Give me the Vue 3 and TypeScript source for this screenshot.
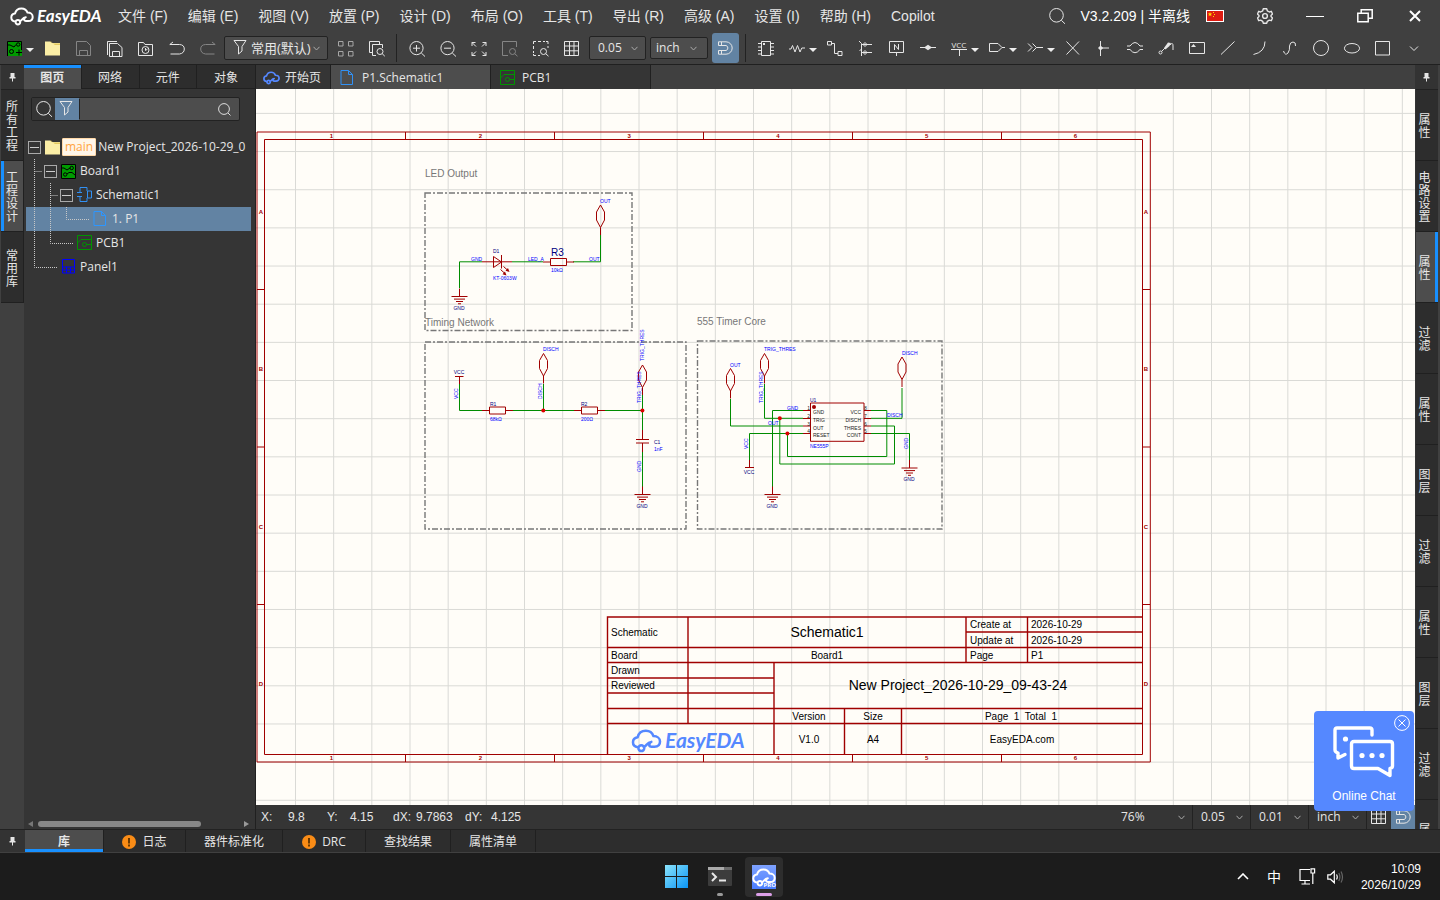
<script setup lang="ts">
import { h, ref } from 'vue'

type Glyph = { s?: string; f?: string }

const glyphs: Record<string, Glyph> = {
  save: { s: 'M.5 .5H10.5L14.5 4.5V14.5H.5Z M3.5 14.5V9.5H11.5V14.5' },
  saveAll: { s: 'M2.5 2.5H10.5L15 6.5V15.5H2.5Z M5.5 15.5V10.5H12.5V15.5 M.5 14V.5H10' },
  history: { s: 'M.5 14.5V1.5H5.5L7 3.5H14.5V14.5Z M7.5 5.5A3.5 3.5 0 1 1 7.5 12.5A3.5 3.5 0 1 1 7.5 5.5 M7.5 7V9.5L9.5 8' },
  undo: { s: 'M4 1L.8 3.5H10.5Q15.3 3.8 15.3 8T10.5 13H1.5' },
  redo: { s: 'M12 1L15.2 3.5H5.5Q.7 3.8 .7 8T5.5 13H14.5' },
  filter: { s: 'M1 .5H13L9 6.5V11L5.5 14V6.5Z' },
  tiles: { s: 'M.5 .5H5V5H.5Z M10.5 .5H15V5H10.5Z M.5 10.5H5V15H.5Z M10.5 10.5H15V15H10.5Z' },
  find: { s: 'M3 11.5H.5V.5H10.5V3 M7 14.5H3.5V3.5H13.5V7 M11 7.5A3 3 0 1 1 11 13.5A3 3 0 1 1 11 7.5 M13.2 12.7L15.8 15.2' },
  zoomIn: { s: 'M7.5 .5A6.6 6.6 0 1 1 7.5 13.7A6.6 6.6 0 1 1 7.5 .5 M12.3 12L16 15.5 M7.5 4V10.5 M4 7.2H11' },
  zoomOut: { s: 'M7.5 .5A6.6 6.6 0 1 1 7.5 13.7A6.6 6.6 0 1 1 7.5 .5 M12.3 12L16 15.5 M4 7.2H11' },
  fit: { s: 'M1 5V1.5H4.5M1 1.5L5 5.5 M11.5 1.5H15V5M15 1.5L11 5.5 M1 11V14.5H4.5M1 14.5L5 10.5 M11.5 14.5H15V11M15 14.5L11 10.5' },
  zoomSheet: { s: 'M6 14.5H.5V.5H14.5V6 M10.5 7.5A3 3 0 1 1 10.5 13.5A3 3 0 1 1 10.5 7.5 M12.7 12.7L15.5 15.2' },
  zoomArea: { s: 'M.5 3V.5H3 M5 .5H8 M10 .5H12 M13 .5H15V3 M.5 5V8 M.5 10V12 M.5 13V14.5H3 M5 14.5H7 M15 5V7 M10.5 7.5A3 3 0 1 1 10.5 13.5A3 3 0 1 1 10.5 7.5 M12.7 12.7L15.5 15.2' },
  grid: { s: 'M.5 .5H14.5V14.5H.5Z M5.5 .5V14.5 M10 .5V14.5 M.5 5H14.5 M.5 9.8H14.5' },
  chip: { s: 'M3.5 .5H12.5V14.5H3.5Z M0 2.5H3 M0 6H3 M0 9.5H3 M0 13H3 M13 2.5H16 M13 6H16 M13 9.5H16 M13 13H16', f: 'M5 2H7V4H5Z' },
  resistor: { s: 'M0 8H2L3.5 4.5L6 11L8.5 4.5L11 11L12.8 7H16' },
  wire: { s: 'M.5 .5H4.5V4H.5Z M5 2.5H7.5V12.5H11 M11 10.5H15V14.5H11Z' },
  bus: { s: 'M1 0L3.5 2.5V15 M3.5 3.5H14 M3.5 11.5H14 M5 3.5L7 1.5L9 3.5L7 5.5Z M5 11.5L7 9.5L9 11.5L7 13.5Z M3.5 8L1.5 10' },
  netLabel: { s: 'M.5 .5H14.5V11.5H.5Z M7.5 11.5V15 M5.5 9V3.5L9.5 8.5V3' },
  junction: { s: 'M0 6.5H16', f: 'M4 6.5L8 3.8L12 6.5L8 9.2Z' },
  port: { s: 'M.5 2.5H9L13 6.5L9 10.5H.5Z M13 6.5H16' },
  connector: { s: 'M1 2.5L5 6.5L1 10.5 M5.5 2.5L9.5 6.5L5.5 10.5 M9.5 6.5H16' },
  cross: { s: 'M1.5 .5L14 13.5 M14 .5L1.5 13.5' },
  tee: { s: 'M4.5 0V15 M4.5 7H13', f: 'M4.5 4.5L7.2 7L4.5 9.5L2 7Z' },
  hop: { s: 'M0 5H3Q8 -2 13 5H16 M0 8.5H3Q8 15 13 8.5H16' },
  probe: { s: 'M1 11.5A1.5 1.5 0 1 1 4 11.5A1.5 1.5 0 1 1 1 11.5 M3.5 10.5L7 7 M12 4Q15 .5 15 5V9', f: 'M6 7L10 1.5L13 2L11.5 5L7.5 8.5Z' },
  frame: { s: 'M.5 1.5H15.5V12.5H.5Z', f: 'M2 6L4.5 3L7 6Z' },
  line: { s: 'M1 13.5L14.5 .5' },
  arc: { s: 'M14 .5Q14 11 2.5 13.5' },
  curve: { s: 'M1.5 10Q3 15 6 12Q8 9 7.5 5Q8 1 11 1Q14 1 13.5 5' },
  circle: { s: 'M8 -.5A7.5 7.5 0 1 1 8 14.5A7.5 7.5 0 1 1 8 -.5' },
  ellipse: { s: 'M8 2.5A7.5 4.7 0 1 1 8 12A7.5 4.7 0 1 1 8 2.5' },
  rect: { s: 'M.5 .5H14.5V14H.5Z' },
  more: { s: 'M4 5.5L8 9.5L12 5.5' },
  search: { s: 'M7.5 .5A6.8 6.8 0 1 1 7.5 14.1A6.8 6.8 0 1 1 7.5 .5 M12.3 12.3L16 15.8' },
  file: { s: 'M1 .5H8.5L12.5 4.5V14.5H1Z M8.5 .5V4.5H12.5' },
  pcb: { s: 'M.5 .5H14.5V14.5H.5Z M.5 8L4 4.5H14.5 M5.5 9.5A2 2 0 1 1 9.5 9.5A2 2 0 1 1 5.5 9.5 M9.5 9.5H14.5' },
  symbol: { s: 'M3 5V.5H10V4 M3 10V14.5H10V11 M0 5.5H5 M0 9.5H5 M10.5 4H14.5V11H10.5Z' },
  panel: { s: 'M1.5 .5H13.5V14H1.5Z M1.5 8H13.5 M1.5 11H13.5 M5.5 8V14 M9.5 8V14' },
  pin: { s: 'M7.5 9V12.5', f: 'M5.5 4H9.5V8H10.5V9.5H4.5V8H5.5Z' },
}

const Icon = (p: { name: string }) =>
  h('svg', { width: 16, height: 16, viewBox: '0 0 16 16', overflow: 'visible', 'aria-hidden': 'true' }, [
    h('path', { d: glyphs[p.name].s, fill: 'none', stroke: 'currentColor' }),
    h('path', { d: glyphs[p.name].f, fill: 'currentColor' }),
  ])
Icon.props = ['name']

const Magnet = () =>
  h('svg', { width: 15, height: 14, viewBox: '0 0 15 14', 'aria-hidden': 'true', fill: 'none', stroke: 'currentColor' }, [
    h('path', { d: 'M.5 .8H8A6 6 0 0 1 8 13.2H.5V9.5H8A2.6 2.6 0 0 0 8 4.5H.5Z M3.5 1V4.5 M3.5 9.5V13' }),
  ])

const Cloud = () =>
  h('svg', { width: 24, height: 19, viewBox: '0 0 24 19', 'aria-hidden': 'true', fill: 'none', stroke: 'currentColor', 'stroke-linecap': 'round', 'stroke-linejoin': 'round' }, [
    h('path', {
      d: 'M5.2 14.4C2.6 14 1.3 12.3 1.3 10.4C1.3 8.3 3 6.8 5 6.5C5.8 3.3 8.3 1.4 11.5 1.4C14.4 1.4 16.6 3 17.5 5.6C20.5 5.6 22.7 7.4 22.7 9.9C22.7 12.6 20.8 14 18.3 14H15.8C14.2 14 13.6 12.6 14.6 11.5 M9.8 14.2C12 13.8 12.2 10.6 15.8 10.2 M5.6 15.2A2.3 2.3 0 1 1 10.2 15.2A2.3 2.3 0 1 1 5.6 15.2',
    }),
  ])

const menus = ['文件 (F)', '编辑 (E)', '视图 (V)', '放置 (P)', '设计 (D)', '布局 (O)', '工具 (T)', '导出 (R)', '高级 (A)', '设置 (I)', '帮助 (H)', 'Copilot']

const fileTools = [
  { icon: 'save', label: '保存', dim: true },
  { icon: 'saveAll', label: '全部保存', dim: false },
  { icon: 'history', label: '历史记录', dim: false },
  { icon: 'undo', label: '撤销', dim: false },
  { icon: 'redo', label: '重做', dim: true },
]
const viewTools = [
  { icon: 'zoomIn', label: '放大', dim: false },
  { icon: 'zoomOut', label: '缩小', dim: false },
  { icon: 'fit', label: '适应全部', dim: false },
  { icon: 'zoomSheet', label: '适应选中', dim: true },
  { icon: 'zoomArea', label: '区域适应', dim: false },
  { icon: 'grid', label: '网格', dim: false },
]
const drawTools = [
  { icon: 'chip', label: '器件' },
  { icon: 'resistor', label: '常用器件', drop: true },
  { icon: 'wire', label: '导线' },
  { icon: 'bus', label: '总线' },
  { icon: 'netLabel', label: '网络标签' },
  { icon: 'junction', label: '节点' },
  { icon: 'vcc', label: '电源', drop: true },
  { icon: 'port', label: '网络端口', drop: true },
  { icon: 'connector', label: '连接符', drop: true },
  { icon: 'cross', label: '非连接标识' },
  { icon: 'tee', label: '短接符' },
  { icon: 'hop', label: '差分对' },
  { icon: 'probe', label: '探针' },
  { icon: 'frame', label: '图框' },
  { icon: 'line', label: '直线' },
  { icon: 'arc', label: '圆弧' },
  { icon: 'curve', label: '贝塞尔曲线' },
  { icon: 'circle', label: '圆' },
  { icon: 'ellipse', label: '椭圆' },
  { icon: 'rect', label: '矩形' },
  { icon: 'more', label: '更多' },
]

const leftStrip = ['所有工程', '工程设计', '常用库']
const rightStrip = ['属性', '电路设置', '属性', '过滤', '属性', '图层', '过滤', '属性', '图层', '过滤', '属性']
const panelTabs = ['图页', '网络', '元件', '对象']
const bottomTabs = [
  { text: '库', cls: 'w80' },
  { text: '日志', cls: 'w82', warn: true },
  { text: '器件标准化', cls: 'w97' },
  { text: 'DRC', cls: 'w83', warn: true },
  { text: '查找结果', cls: 'w85' },
  { text: '属性清单', cls: 'w85' },
]
const activeLeft = ref(1)
const activeRight = ref(2)
const activePanel = ref(0)
const activeBottom = ref(0)
const query = ref('')

const gridX = Array.from({ length: 70 }, (_, i) => 295.5 + i * 38.167)
const gridY = Array.from({ length: 40 }, (_, i) => 113.4 + i * 38.16)

const columns = Array.from({ length: 6 }, (_, i) => ({ n: i + 1, x: 331.5 + i * 148.8, tick: 405.5 + i * 149 }))
const rows = ['A', 'B', 'C', 'D'].map((n, i) => ({ n, y: 214 + i * 157.4, tick: 289.5 + i * 157.5 }))

const flags = [
  { x: 600.5, y: 205 },
  { x: 543.5, y: 353.5 },
  { x: 642.5, y: 365 },
  { x: 730.5, y: 368.5 },
  { x: 764.5, y: 353.5 },
  { x: 902, y: 357 },
]
const grounds = [
  { x: 459.5, y: 296.5 },
  { x: 642.5, y: 494.5 },
  { x: 772.5, y: 494.5 },
  { x: 909.5, y: 468 },
]
const resistors = [
  { x: 550.5, y: 262 },
  { x: 489.5, y: 410.5 },
  { x: 581.5, y: 410.5 },
]
const netLabels = [
  { t: 'OUT', x: 600, y: 203 },
  { t: 'GND', x: 471, y: 261 },
  { t: 'LED_A', x: 528, y: 261 },
  { t: 'OUT', x: 589, y: 261 },
  { t: 'KT-0603W', x: 493, y: 280 },
  { t: '10kΩ', x: 551, y: 272 },
  { t: '68kΩ', x: 490, y: 421 },
  { t: '200Ω', x: 581, y: 421 },
  { t: '1nF', x: 654, y: 451 },
  { t: 'DISCH', x: 543, y: 351 },
  { t: 'OUT', x: 730, y: 367 },
  { t: 'TRIG_THRES', x: 764, y: 351 },
  { t: 'DISCH', x: 902, y: 355 },
  { t: 'DISCH', x: 887, y: 417 },
  { t: 'GND', x: 787, y: 410 },
  { t: 'OUT', x: 768, y: 425 },
  { t: 'NE555P', x: 810, y: 448 },
]
const turnedLabels = [
  { t: 'VCC', x: 458, y: 399 },
  { t: 'DISCH', x: 542, y: 399 },
  { t: 'TRIG_THRES', x: 644, y: 361 },
  { t: 'TRIG_THRES', x: 641, y: 403 },
  { t: 'GND', x: 641, y: 472 },
  { t: 'TRIG_THRES', x: 763, y: 403 },
  { t: 'VCC', x: 748, y: 449 },
  { t: 'GND', x: 908, y: 449 },
]
const designators = [
  { t: 'D1', x: 493, y: 253 },
  { t: 'R1', x: 490, y: 406 },
  { t: 'R2', x: 581, y: 406 },
  { t: 'C1', x: 654, y: 444 },
  { t: 'U1', x: 810, y: 402 },
]
const powerNames = [
  { t: 'GND', x: 459, y: 310 },
  { t: 'VCC', x: 459, y: 374 },
  { t: 'GND', x: 642, y: 508 },
  { t: 'GND', x: 772, y: 508 },
  { t: 'VCC', x: 749, y: 474 },
  { t: 'GND', x: 909, y: 481 },
]
const pins = [
  { l: 'GND', ln: '1', r: 'VCC', rn: '8', y: 410.5 },
  { l: 'TRIG', ln: '2', r: 'DISCH', rn: '7', y: 418.5 },
  { l: 'OUT', ln: '3', r: 'THRES', rn: '6', y: 426 },
  { l: 'RESET', ln: '4', r: 'CONT', rn: '5', y: 433.5 },
]
const blockLabels = [
  { t: 'Schematic', x: 611, y: 636 },
  { t: 'Board', x: 611, y: 659 },
  { t: 'Drawn', x: 611, y: 674 },
  { t: 'Reviewed', x: 611, y: 689 },
  { t: 'Create at', x: 970, y: 628 },
  { t: 'Update at', x: 970, y: 644 },
  { t: 'Page', x: 970, y: 659 },
  { t: '2026-10-29', x: 1031, y: 628 },
  { t: '2026-10-29', x: 1031, y: 644 },
  { t: 'P1', x: 1031, y: 659 },
]
const blockCentered = [
  { t: 'Board1', x: 827, y: 659 },
  { t: 'Version', x: 809, y: 720 },
  { t: 'Size', x: 873, y: 720 },
  { t: 'Page  1  Total  1', x: 1021, y: 720 },
  { t: 'V1.0', x: 809, y: 743 },
  { t: 'A4', x: 873, y: 743 },
  { t: 'EasyEDA.com', x: 1022, y: 743 },
]
</script>

<template>
  <div class="app">
    <header class="menubar">
      <div class="brand"><Cloud class="brand-cloud" /><span>EasyEDA</span></div>
      <nav class="menus">
        <button v-for="m in menus" :key="m">{{ m }}</button>
      </nav>
      <div class="title-right">
        <button class="plain" aria-label="搜索"><Icon name="search" /></button>
        <span class="version">V3.2.209 | 半离线</span>
        <svg class="flag" width="18" height="12" viewBox="0 0 18 12" aria-hidden="true">
          <rect width="18" height="12" fill="#fff" />
          <rect x="1" y="1" width="16" height="10" fill="#de1c12" />
          <path d="M4 2L4.6 3.6H6.2L5 4.6L5.4 6.2L4 5.2L2.6 6.2L3 4.6L1.8 3.6H3.4Z M7 2H8V3H7Z M8 4H9V5H8Z M7 6H8V7H7Z" fill="#ffde00" />
        </svg>
      </div>
      <div class="window-buttons">
        <button aria-label="设置">
          <svg width="16" height="16" viewBox="0 0 16 16" fill="none" stroke="currentColor" stroke-width="1.4" stroke-linejoin="round">
            <path d="M6.3 .8H9.7L10.3 2.8L12.4 4L14.3 3.3L15.5 6L14 7.5V8.6L15.5 10L14.3 12.7L12.3 12.1L10.3 13.3L9.7 15.2H6.3L5.7 13.3L3.7 12.1L1.7 12.7L.5 10L2 8.6V7.5L.5 6L1.7 3.3L3.6 4L5.7 2.8Z" />
            <circle cx="8" cy="8" r="2.4" />
          </svg>
        </button>
        <button aria-label="最小化"><svg width="18" height="16" viewBox="0 0 18 16" stroke="#fff"><path d="M0 8.5H18" /></svg></button>
        <button aria-label="还原">
          <svg width="16" height="14" viewBox="0 0 16 14" fill="none" stroke="#fff" stroke-width="1.5"><path d="M.8 4.2H11.2V12.8H.8Z M4.2 4V.8H15.2V9.2H11.5" /></svg>
        </button>
        <button aria-label="关闭"><svg width="12" height="12" viewBox="0 0 12 12" stroke="#fff" stroke-width="2"><path d="M1 1L11 11M11 1L1 11" /></svg></button>
      </div>
    </header>

    <div class="toolbar">
      <button class="tool lead" aria-label="新建">
        <svg width="15" height="15" viewBox="0 0 15 15" fill="none" stroke="#000">
          <rect width="15" height="15" fill="#009a00" stroke="none" />
          <path d="M.5 15V.5H14.5V9 M1 4H3L7 6L9 3.5 M9.5 3.5A1.7 1.7 0 1 1 12.9 3.5A1.7 1.7 0 1 1 9.5 3.5 M2.5 10.5A2 2 0 1 1 6.5 10.5A2 2 0 1 1 2.5 10.5 M9 11.5H15 M12 8.5V14.5" />
        </svg>
        <i class="caret"></i>
      </button>
      <button class="tool" aria-label="打开">
        <svg width="16" height="15" viewBox="0 0 16 15"><path d="M0 14.5V.5H5L7 2H15V14.5Z" fill="#fbeea6" /><path d="M5 .5H6L8 2.5H15V4H10Z" fill="#e2c85c" /></svg>
      </button>
      <button v-for="t in fileTools" :key="t.icon" class="tool" :class="{ dim: t.dim }" :aria-label="t.label"><Icon :name="t.icon" /></button>
      <label class="picker preset">
        <Icon name="filter" class="lead-icon" />
        <select aria-label="过滤器"><option>常用(默认)</option></select>
        <svg class="chev" width="7" height="5" viewBox="0 0 7 5"><path d="M.5 .8L3.5 4L6.5 .8" /></svg>
      </label>
      <button class="tool dimmer gap2" aria-label="排列"><Icon name="tiles" /></button>
      <button class="tool" aria-label="查找"><Icon name="find" /></button>
      <span class="sep"></span>
      <button v-for="t in viewTools" :key="t.icon" class="tool" :class="{ dim: t.dim }" :aria-label="t.label"><Icon :name="t.icon" /></button>
      <label class="picker size">
        <select aria-label="栅格尺寸"><option>0.05</option></select>
        <svg class="chev" width="7" height="5" viewBox="0 0 7 5"><path d="M.5 .8L3.5 4L6.5 .8" /></svg>
      </label>
      <label class="picker unit">
        <select aria-label="单位"><option>inch</option></select>
        <svg class="chev" width="7" height="5" viewBox="0 0 7 5"><path d="M.5 .8L3.5 4L6.5 .8" /></svg>
      </label>
      <button class="snap" aria-label="吸附"><Magnet /></button>
      <span class="sep second"></span>
      <button v-for="t in drawTools" :key="t.icon" class="tool" :class="{ wide: t.drop }" :aria-label="t.label">
        <span v-if="t.icon === 'vcc'" class="vcc">VCC</span>
        <Icon v-else :name="t.icon" />
        <i v-if="t.drop" class="caret"></i>
      </button>
    </div>

    <main class="work">
      <aside class="strip left">
        <button class="pin" aria-label="固定左侧面板"><Icon name="pin" /></button>
        <button v-for="(t, i) in leftStrip" :key="t" class="vtab" :class="{ on: i === activeLeft }" @click="activeLeft = i"><span>{{ t }}</span></button>
      </aside>

      <section class="panel">
        <div class="panel-tabs">
          <button v-for="(t, i) in panelTabs" :key="t" :class="{ on: i === activePanel }" @click="activePanel = i">{{ t }}</button>
        </div>
        <div class="search-row">
          <button class="find" aria-label="查找"><Icon name="search" /></button>
          <button class="filter" aria-label="过滤"><Icon name="filter" /></button>
          <input v-model="query" aria-label="搜索图页" />
          <svg class="glass" width="13" height="13" viewBox="0 0 13 13" fill="none" stroke="#ddd"><circle cx="6" cy="6" r="5.4" /><path d="M10 10L12.5 12.5" /></svg>
        </div>
        <div class="tree">
          <svg class="guides" width="80" height="144" viewBox="0 0 80 144" aria-hidden="true">
            <path d="M10.5 24V132.5H34 M10.5 36.5H18 M26.5 48V108.5H50 M26.5 60.5H34 M42.5 72V84.5H66" />
          </svg>
          <ul>
            <li>
              <div class="node"><button class="fold" aria-label="折叠"></button>
                <svg class="nicon" width="15" height="15" viewBox="0 0 15 15"><path d="M0 14.5V.5H5L7 2H15V14.5Z" fill="#fbeea6" /><path d="M5 .5H6L8 2.5H15V4H10Z" fill="#e2c85c" /></svg>
                <span class="badge">main</span><span class="name">New Project_2026-10-29_0</span>
              </div>
              <ul>
                <li>
                  <div class="node"><button class="fold" aria-label="折叠"></button>
                    <svg class="nicon" width="15" height="15" viewBox="0 0 15 15" fill="none" stroke="#000">
                      <rect width="15" height="15" fill="#009a00" stroke="none" />
                      <path d="M.5 .5H14.5V14.5H.5Z M1 4H3L6 6L9 4 M9 4A1.7 1.7 0 1 1 12.4 4A1.7 1.7 0 1 1 9 4 M2.5 10.5A1.7 1.7 0 1 1 5.9 10.5A1.7 1.7 0 1 1 2.5 10.5 M6 10L8 8.5H11L14 11" />
                    </svg>
                    <span class="name">Board1</span>
                  </div>
                  <ul>
                    <li>
                      <div class="node"><button class="fold" aria-label="折叠"></button><Icon name="symbol" class="nicon blue" /><span class="name tight">Schematic1</span></div>
                      <ul>
                        <li class="node sel leaf"><Icon name="file" class="nicon blue" /><span class="name tight">1. P1</span></li>
                      </ul>
                    </li>
                    <li class="node leaf"><Icon name="pcb" class="nicon green" /><span class="name tight">PCB1</span></li>
                  </ul>
                </li>
                <li class="node leaf"><Icon name="panel" class="nicon deep" /><span class="name tight">Panel1</span></li>
              </ul>
            </li>
          </ul>
        </div>
        <div class="hscroll"><i class="arrow prev"></i><i class="thumb"></i><i class="arrow next"></i></div>
      </section>

      <section class="center">
        <div class="doc-tabs">
          <button class="home"><Cloud class="mini-cloud" />开始页</button>
          <button class="doc on"><Icon name="file" class="blue" />P1.Schematic1</button>
          <button class="doc"><Icon name="pcb" class="green" />PCB1</button>
        </div>
        <div class="canvas">
          <svg width="100%" height="100%" aria-label="Schematic1">
            <g transform="translate(-256 -89)">
              <g class="grid-lines">
                <line v-for="x in gridX" :key="x" :x1="x" :x2="x" y1="89" y2="1700" />
                <line v-for="y in gridY" :key="y" x1="256" x2="3000" :y1="y" :y2="y" />
              </g>

              <g class="part">
                <path d="M257 132H1150.3V762H257Z M264.5 139.5H1142.5V754.5H264.5Z" />
                <template v-for="(c, i) in columns" :key="c.n">
                  <path v-if="i < 5" :d="`M${c.tick} 132V139.5M${c.tick} 754.5V762`" />
                </template>
                <template v-for="(r, i) in rows" :key="r.n">
                  <path v-if="i < 3" :d="`M257 ${r.tick}H264.5M1142.5 ${r.tick}H1150`" />
                </template>
                <path class="block" d="M607.5 754V617H1142 M607.5 647.5H1142 M607.5 662.5H1142 M607.5 678H774 M607.5 693H774 M607.5 708.5H1142 M607.5 723.5H1142 M966 632H1142 M688 617V723.5 M774 662.5V754 M966 617V662.5 M1027.5 617V662.5 M844.5 708.5V754 M901.5 708.5V754" />
              </g>
              <g class="mark">
                <template v-for="c in columns" :key="c.n">
                  <text :x="c.x" y="138">{{ c.n }}</text>
                  <text :x="c.x" y="760">{{ c.n }}</text>
                </template>
                <template v-for="r in rows" :key="r.n">
                  <text x="261" :y="r.y">{{ r.n }}</text>
                  <text x="1146" :y="r.y">{{ r.n }}</text>
                </template>
              </g>

              <g class="zone">
                <rect x="425" y="193" width="207" height="137.5" />
                <rect x="425" y="342" width="261" height="187" />
                <rect x="697.5" y="341" width="244.5" height="188" />
              </g>
              <g class="zone-title">
                <text x="425" y="177">LED Output</text>
                <text x="425" y="326">Timing Network</text>
                <text x="697" y="325">555 Timer Core</text>
              </g>

              <g class="net">
                <path d="M600.5 235V261.8H573 M512 261.8H543 M482 261.8H459.5V288" />
                <path d="M459.5 384V410.5H482 M512 410.5H574 M604 410.5H642.5 M543.5 384V410.5 M642.5 395V430 M642.5 452V487" />
                <path d="M730.5 399V426H803 M764.5 384V418.3H803 M803 410.5H772.5V487 M749.5 460V433.5H803 M779.8 418.3V464H894.5V426H871 M787.5 433.5V456.5H886.8V410.5H871 M902 388V418.3H871 M871 433.5H909.5V460" />
              </g>
              <g class="part">
                <path v-for="(f, i) in flags" :key="i" :d="`M${f.x} ${f.y}L${f.x + 4} ${f.y + 7}V${f.y + 15}L${f.x} ${f.y + 22.5}L${f.x - 4} ${f.y + 15}V${f.y + 7}ZM${f.x} ${f.y + 22.5}v7.5`" />
                <path v-for="(g, i) in grounds" :key="i" :d="`M${g.x} ${g.y}v-8M${g.x - 8} ${g.y}h16M${g.x - 5.5} ${g.y + 2.6}h11M${g.x - 3.5} ${g.y + 5}h7M${g.x - 1.5} ${g.y + 7.3}h3`" />
                <path v-for="(r, i) in resistors" :key="i" :d="`M${r.x} ${r.y - 3.5}h16v7h-16ZM${r.x} ${r.y}h-7.5M${r.x + 16} ${r.y}h7.5`" />
                <path d="M482 261.8H512 M493.5 256.5V267.5L501.5 262Z M501.5 255V268.5 M503.5 266.5L508 270.5 M500.5 269.5L505 273.5" />
                <path class="solid" d="M509.5 272L505.5 270.8L508 268Z M506.5 275.5L502.5 274.2L505 271.5Z" />
                <path d="M455 376.5H463.5 M459.5 376.5V384 M642.5 430V439 M636 439.5H649 M636 443H649 M642.5 443V452" />
                <path d="M745 467.5H754 M749.5 460V467.5" />
                <path d="M810.5 403H864V441.3H810.5Z" />
                <circle class="solid" cx="814" cy="407" r="2" />
                <path v-for="p in pins" :key="p.l" :d="`M803 ${p.y}H810.5M864 ${p.y}H871`" />
              </g>
              <g class="dots">
                <circle cx="543.3" cy="410.6" r="2" />
                <circle cx="642.4" cy="410.6" r="2" />
                <circle cx="779.8" cy="418.3" r="2" />
                <circle cx="787.4" cy="433.6" r="2" />
              </g>

              <g class="tag">
                <text v-for="(l, i) in netLabels" :key="i" :x="l.x" :y="l.y">{{ l.t }}</text>
                <text v-for="(l, i) in turnedLabels" :key="`r${i}`" :transform="`translate(${l.x} ${l.y}) rotate(-90)`">{{ l.t }}</text>
              </g>
              <g class="tag navy">
                <text v-for="l in designators" :key="l.t" :x="l.x" :y="l.y">{{ l.t }}</text>
                <text v-for="(l, i) in powerNames" :key="i" class="mid" :x="l.x" :y="l.y">{{ l.t }}</text>
              </g>
              <text class="big-ref" x="551" y="256">R3</text>
              <g class="tag black">
                <template v-for="p in pins" :key="p.l">
                  <text x="813" :y="p.y + 3.5">{{ p.l }}</text>
                  <text class="end" x="861" :y="p.y + 3.5">{{ p.r }}</text>
                  <text class="end" x="810" :y="p.y - 0.5">{{ p.ln }}</text>
                  <text x="864" :y="p.y - 0.5">{{ p.rn }}</text>
                </template>
              </g>

              <g class="block-text">
                <text v-for="(l, i) in blockLabels" :key="i" :x="l.x" :y="l.y">{{ l.t }}</text>
                <text v-for="l in blockCentered" :key="l.t" class="mid pre" :x="l.x" :y="l.y">{{ l.t }}</text>
                <text class="mid large" x="827" y="637">Schematic1</text>
                <text class="mid large" x="958" y="690">New Project_2026-10-29_09-43-24</text>
              </g>
              <g class="block-logo">
                <svg x="631" y="729" width="31" height="24" viewBox="0 0 24 19" fill="none" stroke="#5588ff" stroke-width="2" stroke-linecap="round" stroke-linejoin="round">
                  <path d="M5.2 14.4C2.6 14 1.3 12.3 1.3 10.4C1.3 8.3 3 6.8 5 6.5C5.8 3.3 8.3 1.4 11.5 1.4C14.4 1.4 16.6 3 17.5 5.6C20.5 5.6 22.7 7.4 22.7 9.9C22.7 12.6 20.8 14 18.3 14H15.8C14.2 14 13.6 12.6 14.6 11.5 M9.8 14.2C12 13.8 12.2 10.6 15.8 10.2 M5.6 15.2A2.3 2.3 0 1 1 10.2 15.2A2.3 2.3 0 1 1 5.6 15.2" />
                </svg>
                <text x="665" y="748">EasyEDA</text>
              </g>
            </g>
          </svg>
        </div>
        <footer class="status">
          <span class="kx">X:</span><span class="vx">9.8</span>
          <span class="ky">Y:</span><span class="vy">4.15</span>
          <span class="ky">dX:</span><span class="vdx">9.7863</span>
          <span class="kdy">dY:</span><span>4.125</span>
          <span class="grow"></span>
          <label class="spick zoom"><select aria-label="缩放"><option>76%</option></select><svg class="chev" width="7" height="5" viewBox="0 0 7 5"><path d="M.5 .8L3.5 4L6.5 .8" /></svg></label>
          <label class="spick"><select aria-label="栅格"><option>0.05</option></select><svg class="chev" width="7" height="5" viewBox="0 0 7 5"><path d="M.5 .8L3.5 4L6.5 .8" /></svg></label>
          <label class="spick"><select aria-label="Alt 栅格"><option>0.01</option></select><svg class="chev" width="7" height="5" viewBox="0 0 7 5"><path d="M.5 .8L3.5 4L6.5 .8" /></svg></label>
          <label class="spick"><select aria-label="坐标单位"><option>inch</option></select><svg class="chev" width="7" height="5" viewBox="0 0 7 5"><path d="M.5 .8L3.5 4L6.5 .8" /></svg></label>
          <button class="sbtn" aria-label="网格"><Icon name="grid" /></button>
          <button class="sbtn on" aria-label="吸附"><Magnet /></button>
        </footer>
        <div class="chat">
          <button class="chat-close" aria-label="关闭聊天">
            <svg width="16" height="16" viewBox="0 0 16 16" fill="none" stroke="#fff"><circle cx="8" cy="8" r="7.4" /><path d="M4.5 4.5L11.5 11.5M11.5 4.5L4.5 11.5" /></svg>
          </button>
          <svg class="bubbles" width="62" height="52" viewBox="0 0 62 52" fill="none" stroke="#fff" stroke-width="3.4" stroke-linejoin="round" stroke-linecap="round">
            <path d="M39 9V4Q39 2 37 2H4Q2 2 2 4V24Q2 26 5 27V32L12 28.5" />
            <path d="M21 15.5H57Q59.5 15.5 59.5 18V40Q59.5 42 57 42.5V49.5L45 42.5H21Q18.5 42.5 18.5 40V18Q18.5 15.5 21 15.5Z" />
            <g fill="#fff" stroke="none"><circle cx="12.5" cy="13" r="2.6" /><circle cx="29" cy="29.5" r="2.6" /><circle cx="39" cy="29.5" r="2.6" /><circle cx="49" cy="29.5" r="2.6" /></g>
          </svg>
          <span>Online Chat</span>
        </div>
      </section>

      <aside class="strip right">
        <button class="pin" aria-label="固定右侧面板"><Icon name="pin" /></button>
        <button v-for="(t, i) in rightStrip" :key="i" class="vtab" :class="{ on: i === activeRight }" @click="activeRight = i"><span>{{ t }}</span></button>
      </aside>
    </main>

    <div class="bottom-tabs">
      <button class="bpin" aria-label="固定底部面板"><Icon name="pin" /></button>
      <button v-for="(t, i) in bottomTabs" :key="t.text" class="btab" :class="[t.cls, { on: i === activeBottom }]" @click="activeBottom = i">
        <svg v-if="t.warn" width="14" height="14" viewBox="0 0 14 14" aria-hidden="true"><circle cx="7" cy="7" r="7" fill="#fa8c16" /><path d="M6 3H8V8.5H6Z M6 9.5H8V11.5H6Z" fill="#6b3a00" /></svg>
        {{ t.text }}
      </button>
    </div>

    <footer class="taskbar">
      <span></span>
      <div class="apps">
        <button aria-label="开始">
          <svg width="23" height="23" viewBox="0 0 23 23">
            <defs><linearGradient id="win" x1="0" y1="0" x2="1" y2="1"><stop offset="0" stop-color="#8be4fc" /><stop offset="1" stop-color="#0a94f5" /></linearGradient></defs>
            <path d="M0 0H11V11H0Z M12 0H23V11H12Z M0 12H11V23H0Z M12 12H23V23H12Z" fill="url(#win)" />
          </svg>
        </button>
        <button class="run" aria-label="终端">
          <svg width="24" height="19" viewBox="0 0 24 19"><rect width="24" height="19" rx="1" fill="#3c3c3c" /><path d="M0 0H16V3H0Z" fill="#aaa" /><path d="M16 0H24V3H16Z" fill="#6c6c6c" /><path d="M4 6L8 10L4 14" fill="none" stroke="#e8e8e8" stroke-width="2" /><path d="M11 13.5H18" stroke="#e8e8e8" stroke-width="2" /></svg>
        </button>
        <button class="run active" aria-label="EasyEDA Pro">
          <span class="pro"><Cloud class="pro-cloud" /><b>PRO</b></span>
        </button>
      </div>
      <div class="tray">
        <svg width="12" height="7" viewBox="0 0 12 7" fill="none" stroke="#fff" stroke-width="1.6"><path d="M1 6L6 1L11 6" /></svg>
        <span class="ime">中</span>
        <svg class="net-icon" width="17" height="17" viewBox="0 0 17 17" fill="none" stroke="#fff" stroke-width="1.2"><path d="M11 1.5H1V12.5H11 M6 12.5V16 M2.5 16H11 M12 .8H15.6V5H12Z M13.8 5V16" /></svg>
        <svg class="vol" width="17" height="14" viewBox="0 0 17 14" fill="none" stroke="#fff" stroke-width="1.2"><path d="M.8 4.8H3.5L7.3 1.2V12.8L3.5 9.2H.8Z M9.5 4.5Q11 7 9.5 9.5" /><path d="M11.8 3Q14 7 11.8 11 M14 1.5Q17 7 14 12.5" stroke="#666" /></svg>
        <div class="clock"><span>10:09</span><span>2026/10/29</span></div>
      </div>
    </footer>
  </div>
</template>

<style>
html,
body {
  margin: 0;
  background: #1c1c1c;
}
</style>

<style scoped>
.app {
  display: flex;
  flex-direction: column;
  height: 100vh;
  overflow: hidden;
  background: #404040;
  color: #e6e6e6;
  font: 12px/16px 'Open Sans', 'Noto Sans CJK SC', sans-serif;
}
button {
  margin: 0;
  padding: 0;
  border: 0;
  background: none;
  color: inherit;
  font: inherit;
}
svg {
  display: block;
  flex: none;
}

/* title bar */
.menubar {
  display: flex;
  align-items: center;
  flex: none;
  height: 32px;
  font: 14px/20px 'Liberation Sans', 'Noto Sans CJK SC', sans-serif;
}
.brand {
  display: flex;
  align-items: center;
  gap: 3px;
  width: 92px;
  padding-left: 10px;
  margin-right: 16px;
  color: #fff;
  font: italic bold 17px/20px Lato, sans-serif;
}
.brand-cloud {
  stroke-width: 2;
}
.menus {
  display: flex;
  gap: 20px;
  white-space: nowrap;
}
.title-right {
  display: flex;
  align-items: center;
  gap: 16px;
  margin-left: auto;
  padding-right: 16px;
  white-space: nowrap;
}
.version {
  color: #fff;
}
.window-buttons {
  display: flex;
}
.window-buttons button {
  display: flex;
  align-items: center;
  justify-content: center;
  width: 50px;
  height: 32px;
}

/* toolbar */
.toolbar {
  display: flex;
  align-items: center;
  flex: none;
  height: 32px;
  border-bottom: 1px solid #202020;
}
.tool {
  display: flex;
  flex: none;
  width: 31px;
  height: 32px;
  padding: 9px 0 0 8px;
}
.tool.lead {
  width: 37px;
  padding-left: 7px;
}
.tool.wide {
  width: 38px;
}
.tool.dim {
  color: #858585;
}
.tool.dimmer {
  color: #a5a5a5;
}
.gap2 {
  margin-left: 2px;
}
.caret {
  width: 0;
  height: 0;
  margin: 7px 0 0 4px;
  border: 4px solid transparent;
  border-top-color: #eee;
  border-bottom: 0;
}
.vcc {
  width: 16px;
  height: 15px;
  font: 8px/8px 'Open Sans', sans-serif;
  background: linear-gradient(currentColor, currentColor) 0 8px / 16px 1px no-repeat, linear-gradient(currentColor, currentColor) 8px 8px / 1px 7px no-repeat;
}
.sep {
  flex: none;
  width: 1px;
  height: 28px;
  margin: 0 5px 0 4px;
  background: #222;
}
.tool + .sep {
  margin-right: 4px;
}
.sep.second {
  margin: 0 4px 0 6px;
}
.picker,
.spick {
  display: grid;
  flex: none;
  align-items: center;
}
.picker {
  height: 24px;
  box-sizing: border-box;
  border: 1px solid #222;
  border-radius: 2px;
  background: #4d4d4d;
}
.picker > *,
.spick > * {
  grid-area: 1 / 1;
}
select {
  width: 100%;
  height: 100%;
  padding: 0 0 0 8px;
  border: 0;
  appearance: none;
  background: none;
  color: inherit;
  font: inherit;
}
.chev {
  justify-self: end;
  margin-right: 7px;
  fill: none;
  stroke: #aaa;
  pointer-events: none;
}
.preset {
  width: 104px;
  margin-left: 1px;
  font-size: 13px;
}
.preset select {
  padding-left: 26px;
}
.lead-icon {
  margin-left: 8px;
}
.size {
  width: 57px;
  margin-left: 2px;
}
.unit {
  width: 58px;
  height: 22px;
  margin: 0 4px;
}
.unit select {
  padding-left: 5px;
}
.unit .chev {
  margin-right: 10px;
}
.snap {
  display: flex;
  align-items: center;
  justify-content: center;
  width: 27px;
  height: 30px;
  border-radius: 3px;
  background: #6283a3;
}

/* work area */
.work {
  display: flex;
  flex: 1;
  min-height: 0;
}
.strip {
  display: flex;
  flex-direction: column;
  flex: none;
  width: 24px;
  box-sizing: border-box;
  overflow: hidden;
}
.strip.left {
  padding-left: 1px;
}
.strip.right {
  padding-right: 2px;
  border-left: 1px solid #333;
  width: 25px;
}
.pin {
  display: flex;
  flex: none;
  align-items: center;
  justify-content: center;
  height: 25px;
  background: #333;
  border-bottom: 1px solid #222;
  box-sizing: border-box;
}
.vtab {
  display: flex;
  flex: none;
  align-items: center;
  justify-content: center;
  height: 71px;
  padding-top: 2px;
  box-sizing: border-box;
  border: solid #202020;
  border-width: 0 1px 1px 0;
  background: #2d2d2d;
  line-height: 13px;
}
.vtab span {
  width: 12px;
  overflow-wrap: anywhere;
}
.vtab.on {
  background: #4d4d4d;
}
.left .vtab.on {
  box-shadow: inset 3px 0 #1890ff;
}
.right .vtab {
  padding-right: 5px;
  border-right: 0;
}
.right .vtab.on {
  box-shadow: inset -3px 0 #1890ff;
}
.panel {
  display: flex;
  flex-direction: column;
  flex: none;
  width: 232px;
  box-sizing: border-box;
  border-right: 1px solid #202020;
  background: #353535;
}
.panel-tabs {
  display: grid;
  grid-template-columns: repeat(4, 1fr);
  height: 24px;
}
.panel-tabs button {
  padding-top: 2px;
  box-sizing: border-box;
  border: solid #202020;
  border-width: 0 1px 1px 0;
  background: #2d2d2d;
}
.panel-tabs button:last-child {
  border-right: 0;
}
.panel-tabs .on {
  background: #4d4d4d;
  border-bottom: 0;
  box-shadow: inset 0 3px #1890ff;
  font-weight: bold;
}
.search-row {
  display: flex;
  align-items: center;
  height: 22px;
  margin: 8px 15px 0 7px;
  border: 1px solid #222;
  border-radius: 2px;
  background: #4d4d4d;
}
.search-row button {
  display: flex;
  align-items: center;
  justify-content: center;
  height: 22px;
}
.find {
  width: 23px;
  background: #353535;
}
.filter {
  width: 24px;
  background: #6283a3;
}
.search-row input {
  flex: 1;
  min-width: 0;
  height: 20px;
  padding: 0 6px;
  border: 0;
  border-left: 1px solid #222;
  background: none;
  color: inherit;
  font: inherit;
}
.glass {
  margin-right: 8px;
}
.tree {
  position: relative;
  flex: 1;
  min-height: 0;
  margin: 14px 4px 0 2px;
  overflow: hidden;
}
.guides {
  position: absolute;
  top: 0;
  left: -2px;
  z-index: 1;
  fill: none;
  stroke: #c8c8c8;
  stroke-dasharray: 1 1;
}
.tree ul {
  margin: 0;
  padding: 0;
  list-style: none;
}
.node {
  display: flex;
  align-items: center;
  height: 24px;
  padding-left: 2px;
  white-space: nowrap;
}
.tree ul ul .node {
  padding-left: 18px;
}
.tree ul ul ul .node {
  padding-left: 34px;
}
.tree ul ul .leaf {
  padding-left: 35px;
}
.tree ul ul ul .leaf {
  padding-left: 51px;
}
.tree ul ul ul ul .leaf {
  padding-left: 67px;
}
.sel {
  background: #6283a3;
}
.fold {
  flex: none;
  width: 13px;
  height: 13px;
  margin-right: 4px;
  border: 1px solid #aaa;
  background: linear-gradient(#ccc, #ccc) center / 9px 1px no-repeat #353535;
}
.name {
  margin-left: 4px;
}
.badge + .name {
  margin-left: 2px;
}
.name.tight {
  margin-left: 3px;
}
.badge {
  height: 16px;
  margin-left: 2px;
  padding: 0 2px;
  border: 1px solid #ffd9a8;
  border-radius: 1px;
  background: #fff6e9;
  color: #ffa542;
}
.blue {
  color: #3191f5;
}
.green {
  color: #009400;
}
.deep {
  color: #0000ff;
}
.sel .blue {
  color: #2d96ff;
}
.hscroll {
  display: flex;
  align-items: center;
  height: 10px;
  padding: 0 6px 0 4px;
}
.arrow {
  border: 3px solid transparent;
}
.prev {
  border-right: 5px solid #777;
  border-left: 0;
}
.next {
  margin-left: auto;
  border-left: 5px solid #999;
  border-right: 0;
}
.thumb {
  width: 163px;
  height: 6px;
  margin-left: 5px;
  border-radius: 3px;
  background: #888;
}

.center {
  position: relative;
  display: flex;
  flex-direction: column;
  flex: 1;
  min-width: 0;
}
.doc-tabs {
  display: flex;
  flex: none;
  height: 24px;
}
.doc-tabs button {
  display: flex;
  align-items: center;
  padding-top: 1px;
  box-sizing: border-box;
  border-right: 1px solid #202020;
  background: #353535;
}
.doc-tabs .home {
  gap: 5px;
  width: 75px;
  padding-left: 7px;
}
.mini-cloud {
  width: 17px;
  height: 14px;
  color: #5588ff;
  stroke-width: 2.4;
}
.doc-tabs .doc {
  gap: 6px;
  width: 160px;
  padding-left: 9px;
}
.doc-tabs .doc.on {
  background: #4d4d4d;
}
.canvas {
  flex: 1;
  min-height: 0;
  overflow: hidden;
  background: #fffdf8;
  font-family: 'Liberation Sans', sans-serif;
}
.grid-lines {
  stroke: #dadad6;
}
.part {
  fill: none;
  stroke: #a00000;
}
.block {
  stroke-width: 1.4;
}
.solid {
  fill: #a00000;
  stroke: none;
}
.net {
  fill: none;
  stroke: #008c00;
}
.dots {
  fill: #dd0000;
}
.zone {
  fill: none;
  stroke: #777;
  stroke-width: 1.4;
  stroke-dasharray: 6 2 2 2;
}
.zone-title {
  font-size: 10px;
  fill: #777;
}
.mark {
  font-size: 6px;
  font-weight: bold;
  fill: #a00000;
  text-anchor: middle;
}
.tag {
  font-size: 5px;
  fill: #0000ff;
}
.tag.navy {
  fill: #000080;
}
.tag.black {
  fill: #222;
}
.mid {
  text-anchor: middle;
}
.end {
  text-anchor: end;
}
.pre {
  white-space: pre;
}
.big-ref {
  font-size: 10px;
  fill: #000080;
}
.block-text {
  font-size: 10px;
  fill: #000;
}
.large {
  font-size: 14px;
}
.block-logo {
  font: italic bold 21px Lato, sans-serif;
  fill: #5588ff;
}

.status {
  display: flex;
  align-items: center;
  flex: none;
  height: 24px;
  padding-left: 5px;
  background: #353535;
  font: 12px/16px 'Liberation Sans', sans-serif;
}
.kx {
  width: 27px;
}
.vx {
  width: 39px;
}
.ky {
  width: 23px;
}
.vy {
  width: 43px;
}
.vdx {
  width: 49px;
}
.kdy {
  width: 26px;
}
.grow {
  flex: 1;
}
.spick {
  width: 58px;
  height: 24px;
  box-sizing: border-box;
  border-right: 1px solid #222;
  font: 12px/16px 'Open Sans', sans-serif;
}
.spick.zoom {
  width: 80px;
}
.sbtn {
  display: flex;
  align-items: center;
  justify-content: center;
  width: 24px;
  height: 24px;
}
.sbtn.on {
  background: #6283a3;
}
.chat {
  position: absolute;
  right: 1px;
  bottom: 18px;
  display: flex;
  flex-direction: column;
  align-items: center;
  justify-content: flex-end;
  gap: 10px;
  width: 100px;
  height: 100px;
  padding-bottom: 7px;
  box-sizing: border-box;
  border-radius: 4px;
  background: #5588ff;
  color: #fff;
  font: 12px/16px 'Liberation Sans', sans-serif;
}
.chat-close {
  position: absolute;
  top: 4px;
  right: 4px;
}

/* bottom tabs */
.bottom-tabs {
  display: flex;
  flex: none;
  height: 24px;
  box-sizing: border-box;
  border-top: 1px solid #222;
  border-bottom: 1px solid #404040;
  background: #2d2d2d;
}
.bpin {
  display: flex;
  align-items: center;
  justify-content: center;
  width: 25px;
  background: #333;
}
.btab {
  display: flex;
  align-items: center;
  justify-content: center;
  gap: 6px;
  padding-top: 1px;
  box-sizing: border-box;
  border-right: 1px solid #202020;
}
.btab.on {
  background: #4d4d4d;
  box-shadow: inset 0 -3px #1890ff;
  font-weight: bold;
}
.w80 {
  width: 79px;
}
.w82 {
  width: 82px;
}
.w83 {
  width: 83px;
}
.w85 {
  width: 85px;
}
.w97 {
  width: 97px;
}

/* taskbar */
.taskbar {
  display: grid;
  grid-template-columns: 1fr auto 1fr;
  align-items: center;
  flex: none;
  height: 47px;
  background: #1c1c1c;
  color: #fff;
}
.apps {
  display: flex;
  gap: 6px;
}
.apps button {
  position: relative;
  display: flex;
  align-items: center;
  justify-content: center;
  width: 38px;
  height: 40px;
  border-radius: 4px;
}
.apps .active {
  background: #2d2d2d;
}
.run::after {
  position: absolute;
  bottom: 1px;
  left: 16px;
  width: 6px;
  height: 3px;
  border-radius: 2px;
  background: #9a9a9a;
  content: '';
}
.run.active::after {
  left: 11px;
  width: 16px;
  background: #dc9fe8;
}
.pro {
  display: grid;
  width: 24px;
  height: 24px;
  background: linear-gradient(#7ea2ff, #4a7dff);
}
.pro > * {
  grid-area: 1 / 1;
}
.pro-cloud {
  margin-top: 3px;
  stroke-width: 2;
}
.pro b {
  align-self: end;
  justify-self: end;
  font: bold 6px/8px 'Open Sans', sans-serif;
}
.tray {
  display: flex;
  align-items: center;
  justify-self: end;
  padding-right: 19px;
}
.ime {
  margin: 0 18px;
  font-size: 14px;
}
.vol {
  margin: 0 17px 0 11px;
}
.clock {
  display: flex;
  flex-direction: column;
  align-items: flex-end;
  font-family: 'Liberation Sans', sans-serif;
}
</style>
